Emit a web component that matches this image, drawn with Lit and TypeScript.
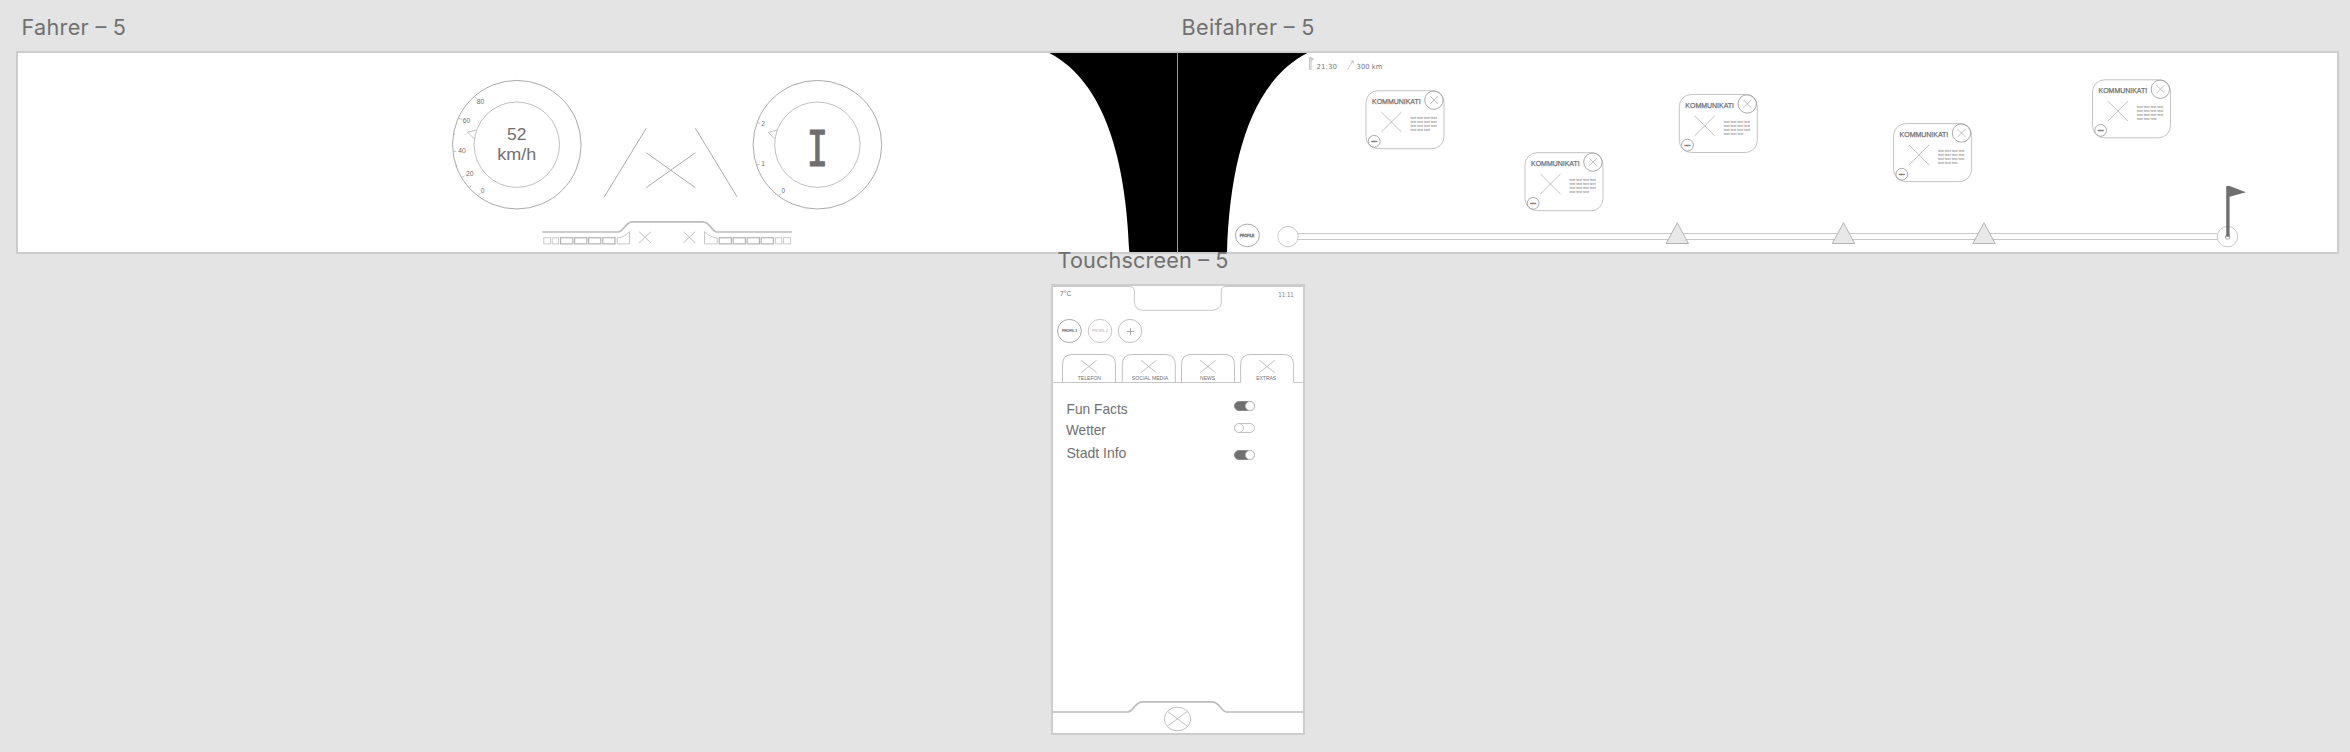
import { LitElement, html, svg, css } from "lit";
import { customElement, property } from "lit/decorators.js";

const label = (x: number, y: number, w: number, size: number, text: string, cls = "") =>
  svg`<text class=${cls} x=${x} y=${y} font-size=${size} textLength=${w} lengthAdjust="spacingAndGlyphs">${text}</text>`;

const cross = (x1: number, y1: number, x2: number, y2: number) =>
  svg`<path class="thin" d="M${x1} ${y1}L${x2} ${y2}M${x1} ${y2}L${x2} ${y1}"/>`;

const drawing = css`
  :host { display: block; font-family: "Liberation Sans", Arial, sans-serif; }
  svg { display: block; overflow: visible; }
  text { fill: #707070; }
  .thin { fill: none; stroke: #b0b0b0; stroke-width: 0.8; }
  .light { fill: none; stroke: #c8c8c8; stroke-width: 1; }
  .mid { fill: none; stroke: #a0a0a0; stroke-width: 0.9; }
  .bar { fill: none; stroke: #bdbdbd; stroke-width: 1.7; }
  .solid { fill: #707070; }
  .black { fill: #000; }
  .wide { font-family: "DejaVu Sans", sans-serif; fill: #787878; }
  .faint { fill: #a8a8a8; }
`;

@customElement("driver-display")
class DriverDisplay extends LitElement {
  static styles = [drawing, css`
    .gear { font-family: "DejaVu Sans Mono", monospace; stroke: #707070; stroke-width: 1.2; }
    .cell { fill: none; stroke: #b4b4b4; stroke-width: 1.2; }
    .cell.off { stroke: #cacaca; stroke-width: 1; }
  `];
  render() {
    const left: [number, number][] = [[543.8, 6.6], [552.2, 6.4], [560.6, 12.2], [574.6, 12.2], [588.6, 12.2], [602.8, 12.2]];
    const right: [number, number][] = [[719.2, 12.2], [733.2, 12.2], [747.2, 12.2], [761.2, 12.2], [775.6, 6.2], [783.6, 6.8]];
    return html`<svg width="1159" height="199" viewBox="18 53 1159 199">
      <circle class="mid" cx="516.8" cy="144.7" r="64.3"/>
      <circle class="thin" cx="516.8" cy="144.7" r="42.7"/>
      <path class="thin" d="M474.3 96.3l2.2 2.4M458.3 118.3l4 1M453.3 133.7l2 .5M453 151.3h3.3M455.2 165.8l2-.6M461.5 177.5l3-1.6M469.5 187.5l1.8-1.5M478.2 195.8l2-2.6M476.3 130l-9 2.2 6.9 6.4"/>
      ${label(476.7, 104, 7.5, 6.8, "80")}${label(462.8, 123, 7.5, 6.8, "60")}
      ${label(458.3, 153, 7.5, 6.8, "40")}${label(466, 176, 7.5, 6.8, "20")}${label(480.7, 193, 3.6, 6.8, "0")}
      ${label(507, 140.2, 19.4, 17.3, "52")}${label(497.3, 160.2, 39, 17.3, "km/h")}
      <circle class="mid" cx="817.4" cy="144.7" r="64.3"/>
      <circle class="thin" cx="817.4" cy="144.7" r="42.7"/>
      <path class="thin" d="M757.3 122.7l3 .7M756.7 165l3-1M779 195.8l2-2.6M777 130.2l-8.7 2.1 6.4 6.7"/>
      ${label(761.3, 126, 3.7, 6.8, "2")}${label(761.3, 166, 3.7, 6.8, "1")}${label(781.6, 193, 3.6, 6.8, "0")}
      <text class="gear" transform="translate(817.4 165.6) scale(.7 1)" text-anchor="middle" font-size="50.5">I</text>
      <path class="mid" d="M646.2 128.3L604.3 196.8M695.4 128.3L737 196.8M646.2 152.7l49.2 35M695.4 152.7l-49.2 35"/>
      <path class="bar" d="M542.3 232H618C624 232 625 221.8 632.5 221.8H703C710.5 221.8 711.5 232 717 232H792"/>
      ${[...left, ...right].map(([x, w]) => svg`<rect class="cell ${w < 10 ? "off" : ""}" x=${x} y="237.7" width=${w} height="6.2"/>`)}
      <path class="light" d="M617.2 238Q625 237 629.5 231.5V243.9H617.2ZM717.2 238Q709 237 704.5 231.5V243.9H717.2Z"/>
      ${cross(639, 231.7, 651, 243)}${cross(683.4, 231.7, 695.3, 243)}
      <path class="black" d="M1049.3 53C1105 82 1126 160 1129.3 252H1177V53Z"/>
    </svg>`;
  }
}

@customElement("passenger-display")
class PassengerDisplay extends LitElement {
  static styles = [drawing, css`
    .stop { fill: #e8e8e8; stroke: #b4b4b4; stroke-width: 1; }
    .title { stroke: #707070; stroke-width: 0.25; }
    .box { fill: #fff; stroke: #c4c4c4; stroke-width: 1; }
    .tiny { stroke: #707070; stroke-width: 0.3; }
  `];
  card(x: number, y: number) {
    return svg`<g transform="translate(${x} ${y})">
      <rect class="box" width="78" height="58" rx="12"/>
      ${label(6, 13.3, 48.7, 7.2, "KOMMUNIKATI", "title")}
      <circle class="mid" cx="67.9" cy="9.4" r="9.2"/>${cross(64, 5.4, 72, 13.4)}
      ${cross(15.4, 21.3, 35.5, 41.3)}
      ${[28.4, 32.4, 36.4].map((b) => label(44.4, b, 26.3, 3.8, "text text text text"))}
      ${label(44.4, 40.4, 19.6, 3.8, "text text text")}
      <circle class="mid" cx="8.2" cy="50.6" r="5.9"/>${label(5.2, 51.4, 6, 2, "MEHR", "tiny")}
    </g>`;
  }
  render() {
    return html`<svg width="1159" height="199" viewBox="1178 53 1159 199">
      <path class="black" d="M1307.3 53C1251 82 1230 160 1227 252H1178V53Z"/>
      <path class="thin" d="M1309.6 70V57.5H1311V70M1311 58l2.5 1-2.5 1.3"/>
      ${label(1316.6, 69, 20.3, 7, "21:30", "wide")}
      <path class="thin" stroke-dasharray="2 1" d="M1347.6 69.6L1352.8 61.2"/>
      <path class="thin" d="M1350.8 61.8l2.3-.9.3 2.3"/>
      ${label(1356.6, 68.8, 25.8, 7, "300 km", "wide")}
      <ellipse class="mid" cx="1247.4" cy="235.4" rx="12" ry="11.3"/>
      ${label(1239.7, 236.6, 14.6, 3.2, "PROFILE", "tiny")}
      <path class="light" d="M1298 233.5H2217.5M1298 239.5H2217.5"/>
      <circle class="light" cx="1288" cy="236.6" r="10.2"/>
      <circle class="light" cx="2227.5" cy="236.6" r="10.2"/>
      <circle class="mid" cx="2227.6" cy="237" r="2.3"/>
      <path class="solid" d="M2226.2 186H2229.6L2246 192.3 2229.6 196.8V236.8H2226.2Z"/>
      ${[1676.8, 1843, 1983.5].map((x) => svg`<path class="stop" d="M${x + .5} 222.8l11.2 20.7h-22.4Z"/>`)}
      ${this.card(1366, 90.7)}${this.card(1525, 152.7)}${this.card(1679.3, 94.5)}${this.card(1893.6, 123.6)}${this.card(2092.5, 79.8)}
    </svg>`;
  }
}

@customElement("toggle-switch")
class ToggleSwitch extends LitElement {
  @property({ type: Boolean, reflect: true }) on = false;
  static styles = css`
    :host { display: flex; box-sizing: border-box; width: 21px; height: 10px; border: 1px solid #c4c4c4; border-radius: 5px; background: #fff; }
    :host([on]) { background: #707070; border-color: #8a8a8a; justify-content: flex-end; }
    .knob { box-sizing: border-box; width: 10px; height: 10px; margin: -1px; border: 1px solid #c0c0c0; border-radius: 50%; background: #fff; }
  `;
  render() { return html`<span class="knob"></span>`; }
}

@customElement("touch-display")
class TouchDisplay extends LitElement {
  static styles = [drawing, css`
    :host { display: flex; flex-direction: column; height: 447px; }
    .tiny { stroke: #707070; stroke-width: 0.2; }
    .settings { display: grid; grid-template-rows: 21px 22px 22px; padding: 17px 48px 0 13px; flex: 1; align-content: start; }
    .row { display: flex; justify-content: space-between; }
    .row toggle-switch { margin-top: 0.5px; }
    .row:first-child toggle-switch { margin-top: 0; }
    .row:last-child toggle-switch { margin-top: 6px; }
  `];
  render() {
    const tabs: [string, number, number, number][] = [
      ["TELEFON", 1062.5, 1077.8, 23.2], ["SOCIAL MEDIA", 1122.3, 1131.8, 36.4],
      ["NEWS", 1181.5, 1200, 15.2], ["EXTRAS", 1240.6, 1256.2, 20],
    ];
    const settings: [string, number, number, number, boolean][] = [
      ["Fun Facts", 0.6, 61, 13, true], ["Wetter", 0, 39.8, 13.3, false], ["Stadt Info", 0.4, 60, 13.5, true],
    ];
    return html`
      <svg width="250" height="30" viewBox="1053 286 250 30">
        ${label(1060, 296, 11.3, 7, "7°C")}${label(1278.2, 297.2, 15.6, 6.9, "11:11", "wide")}
        <path class="light" d="M1053 286.5H1129Q1134.4 286.5 1134.4 291V302Q1135 310.3 1143 310.3H1213Q1221.3 309 1221.3 302V291Q1221.3 286.5 1226 286.5H1303"/>
      </svg>
      <svg width="250" height="34" viewBox="1053 316 250 34">
        <ellipse class="mid" cx="1069.4" cy="331" rx="11.9" ry="11.6"/>${label(1062, 332.4, 15.2, 3.3, "PROFIL 1", "tiny")}
        <ellipse class="light" cx="1100" cy="331" rx="11.8" ry="11.6"/>${label(1092, 332.4, 16, 3.3, "PROFIL 2", "faint")}
        <ellipse class="thin" cx="1130" cy="331" rx="11.8" ry="11.6"/><path class="mid" d="M1127 331.5h7M1130.5 328v7"/>
      </svg>
      <svg width="250" height="34" viewBox="1053 350 250 34">
        ${tabs.map(([name, x, tx, w]) => svg`
          <path class="thin" d="M${x} 382.5V364.5Q${x} 354.5 ${x + 10} 354.5H${x + 43}Q${x + 53} 354.5 ${x + 53} 364.5V382.5"/>
          ${cross(x + 18.6, 360.2, x + 34.2, 372.7)}${label(tx, 379.8, w, 5, name)}`)}
        <path class="light" d="M1053 382.5H1240.6M1293.6 382.5H1303"/>
      </svg>
      <div class="settings">
        ${settings.map(([name, x, w, base, on]) => html`<div class="row">
          <svg width="70" height="18">${label(x, base, w, 14.2, name)}</svg>
          <toggle-switch ?on=${on}></toggle-switch></div>`)}
      </div>
      <svg width="250" height="35" viewBox="1053 698 250 35">
        <path class="bar" d="M1053 712H1127C1134 712 1134 701.8 1143 701.8H1212C1220 701.8 1221 712 1227 712H1303"/>
        <ellipse class="thin" cx="1177.5" cy="719" rx="13.2" ry="11.8"/>${cross(1167.7, 711.5, 1187, 726)}
      </svg>`;
  }
}

@customElement("app-root")
class AppRoot extends LitElement {
  static styles = css`
    :host { display: block; position: relative; width: 2350px; height: 752px; overflow: hidden; background: #e4e4e4; }
    .board { position: absolute; background: #fff; border: 2px solid #cdcdcd; }
    .driver { left: 16px; top: 51px; border-right: 1px solid #a0a0a0; }
    .passenger { left: 1178px; top: 51px; border-left: 0; }
    .touch { left: 1051px; top: 284px; }
    .name { position: absolute; overflow: visible; font-family: Inter, sans-serif; font-size: 21.6px; fill: #707070; }
    .n1 { left: 21px; top: 10px; }
    .n2 { left: 1181px; top: 10px; }
    .n3 { left: 1057px; top: 243px; }
  `;
  name(cls: string, w: number, text: string) {
    return html`<svg class="name ${cls}" width=${w} height="30"><text x="0.5" y="25" textLength=${w}>${text}</text></svg>`;
  }
  render() {
    return html`
      <section class="board driver"><driver-display></driver-display></section>
      <section class="board passenger"><passenger-display></passenger-display></section>
      <section class="board touch"><touch-display></touch-display></section>
      ${this.name("n1", 104.5, "Fahrer – 5")}
      ${this.name("n2", 133, "Beifahrer – 5")}
      ${this.name("n3", 171, "Touchscreen – 5")}`;
  }
}
